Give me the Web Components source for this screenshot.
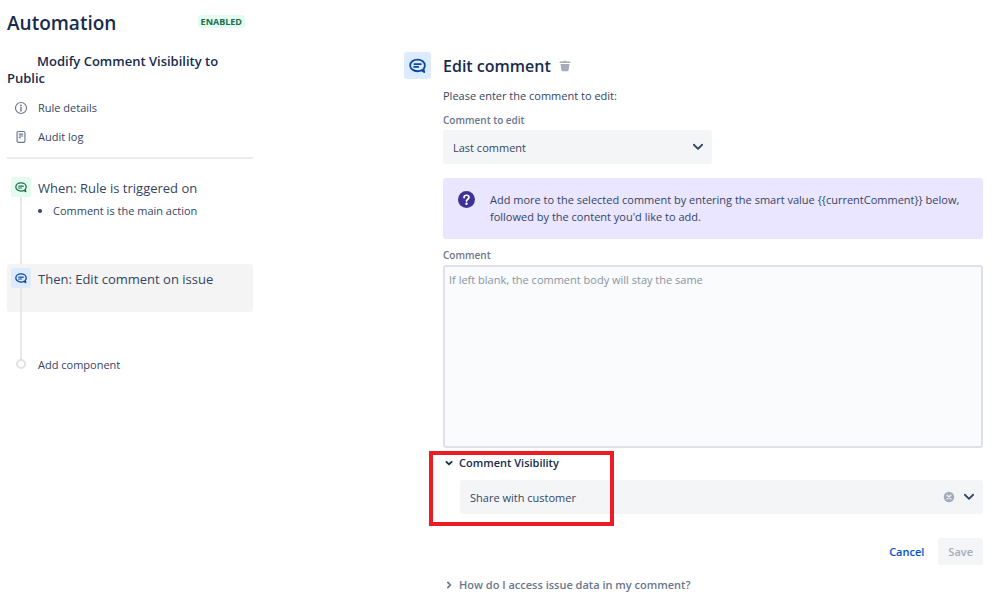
<!DOCTYPE html>
<html lang="en">
<head>
<meta charset="utf-8">
<meta name="viewport" content="width=device-width, initial-scale=1">
<title>Automation</title>
<style>
  body{
    margin: 0;
    background: #fff;
    color: #344563;
    font-family: "Open Sans", "Noto Sans", sans-serif;
    font-size: 11px;
    font-weight: 500;
    line-height: 17px;
    --heading: #172b4d;
    --subtle: #6b778c;
    --field: #f4f5f7;
    --line: #e8e8ec;
    --blue: #0747a6;
  }
</style>
</head>
<body>

<template id="automation-page">
  <style>
    :host{
      display: grid;
      grid-template-columns: 246px minmax(0, 1fr);
      column-gap: 151px;
      padding: 10px 15px 10px 7px;
    }
    main{
      padding-top: 42px;
    }
  </style>
  <aside><slot name="sidebar"></slot></aside>
  <main><slot></slot></main>
</template>

<template id="rule-sidebar">
  <style>
    :host{
      display: block;
    }
    header{
      display: flex;
      align-items: flex-start;
      justify-content: space-between;
      padding-right: 8px;
    }
    h1{
      margin: 0;
      font-size: 19px;
      font-weight: 600;
      line-height: 27px;
      color: var(--heading);
    }
    .badge{
      margin-top: 5px;
      padding: 0 3px;
      border-radius: 3px;
      background: #e3fcef;
      color: #216e4e;
      font-size: 9px;
      font-weight: 700;
      line-height: 13px;
    }
    h2{
      margin: 16px 0 0;
      padding-right: 16px;
      font-size: 13px;
      font-weight: 600;
      line-height: 17px;
      text-indent: 30px;
      color: var(--heading);
    }
    nav{
      display: flex;
      flex-direction: column;
      gap: 12px;
      margin-top: 12px;
      padding-bottom: 12px;
      border-bottom: 2px solid #ebecf0;
    }
    nav a{
      display: flex;
      align-items: center;
      gap: 10px;
      padding-left: 7px;
      color: inherit;
      text-decoration: none;
    }
    nav ui-icon{
      color: var(--subtle);
    }
    .steps{
      margin-top: 14px;
    }
  </style>
  <header>
    <h1>Automation</h1>
    <span class="badge">ENABLED</span>
  </header>
  <h2><slot name="name"></slot></h2>
  <nav>
    <a href="#details"><ui-icon name="info" size="14"></ui-icon>Rule details</a>
    <a href="#audit"><ui-icon name="log" size="14"></ui-icon>Audit log</a>
  </nav>
  <div class="steps"><slot></slot></div>
</template>

<!-- One step of the rule, with the rail that joins it to the next one -->
<template id="rule-step">
  <style>
    :host{
      display: block;
    }
    .card{
      display: grid;
      grid-template-columns: 20px minmax(0, 1fr);
      column-gap: 7px;
      min-height: 44px;
      padding: 4px 4px 0;
      border-radius: 3px;
    }
    :host([selected]) .card{
      background: #f4f4f4;
    }
    .rail{
      display: flex;
      flex-direction: column;
      align-items: center;
    }
    .icon{
      display: grid;
      place-items: center;
      width: 20px;
      height: 20px;
      border-radius: 2px;
      background: #e3fcef;
      color: #216e4e;
    }
    :host([selected]) .icon{
      background: #deebff;
      color: var(--blue);
    }
    .rail::after{
      content: "";
      flex: 1;
      width: 2px;
      background: var(--line);
    }
    .link{
      width: 2px;
      height: 43px;
      margin-left: 13px;
      background: var(--line);
    }
    a{
      display: block;
      color: inherit;
      font-size: 13px;
      font-weight: 400;
      line-height: 22px;
      text-decoration: none;
    }
    ::slotted(ul){
      margin: 3px 0 0;
      padding-left: 15px;
    }
  </style>
  <div class="card">
    <div class="rail"><span class="icon"><ui-icon name="comment" size="12"></ui-icon></span></div>
    <div>
      <a href="#step"><slot name="title"></slot></a>
      <slot></slot>
    </div>
  </div>
  <div class="link"></div>
</template>

<template id="add-step">
  <style>
    :host{
      display: block;
    }
    button{
      display: grid;
      grid-template-columns: 20px auto;
      column-gap: 7px;
      padding: 0 4px;
      border: 0;
      background: none;
      color: inherit;
      font: inherit;
      line-height: 20px;
      cursor: pointer;
    }
    .rail{
      display: flex;
      flex-direction: column;
      align-items: center;
    }
    .rail::before{
      content: "";
      width: 2px;
      height: 4px;
      background: var(--line);
    }
    .dot{
      box-sizing: border-box;
      width: 10px;
      height: 10px;
      border: 2px solid #dfe1e6;
      border-radius: 50%;
    }
  </style>
  <button type="button"><span class="rail"><span class="dot"></span></span><slot></slot></button>
</template>

<template id="action-editor">
  <style>
    :host{
      display: grid;
      grid-template-columns: 27px minmax(0, 1fr);
      column-gap: 12px;
    }
    .icon{
      display: grid;
      place-items: center;
      height: 27px;
      border-radius: 3px;
      background: #deebff;
      color: var(--blue);
    }
    header{
      display: flex;
      align-items: center;
      gap: 8px;
      height: 28px;
    }
    h2{
      margin: 0;
      font-size: 16px;
      font-weight: 600;
      color: var(--heading);
    }
    .delete{
      display: flex;
      padding: 0;
      border: 0;
      background: none;
      color: #a5adba;
      cursor: pointer;
    }
    p{
      margin: 7px 0 8px;
    }
    footer{
      display: flex;
      justify-content: flex-end;
      gap: 4px;
      margin: 24px 0 11px;
    }
    footer button{
      padding: 0 10px;
      border: 0;
      border-radius: 3px;
      background: none;
      color: #0052cc;
      font: inherit;
      font-weight: 600;
      line-height: 27px;
      cursor: pointer;
    }
    footer button:disabled{
      background: var(--field);
      color: #a5adba;
      cursor: default;
    }
  </style>
  <span class="icon"><ui-icon name="comment" size="17"></ui-icon></span>
  <div>
    <header>
      <h2><slot name="title"></slot></h2>
      <button class="delete" type="button" aria-label="Delete"><ui-icon name="trash" size="12"></ui-icon></button>
    </header>
    <p><slot name="intro"></slot></p>
    <slot></slot>
    <footer>
      <button type="button">Cancel</button>
      <button type="button" disabled>Save</button>
    </footer>
    <slot name="help"></slot>
  </div>
</template>

<template id="select-field">
  <style>
    :host{
      display: block;
    }
    label{
      display: block;
      margin-bottom: 1px;
      color: var(--subtle);
      font-size: 10px;
      font-weight: 600;
    }
    label[hidden]{
      display: none;
    }
    .box{
      display: grid;
      grid-template-columns: minmax(0, 1fr) auto;
      align-items: center;
      border-radius: 3px;
      background: var(--field);
    }
    /* the select spans the box, the icons share its last column */
    select{
      grid-area: 1 / 1 / 2 / 3;
      width: 100%;
      height: 34px;
      padding: 0 10px;
      border: 0;
      border-radius: 3px;
      background: none;
      color: inherit;
      font: inherit;
      appearance: none;
    }
    .tools{
      grid-area: 1 / 2 / 2 / 3;
      display: flex;
      align-items: center;
      gap: 8px;
      padding-right: 8px;
      pointer-events: none;
    }
    .clear{
      display: flex;
      padding: 0;
      border: 0;
      background: none;
      color: #a5adba;
      pointer-events: auto;
      cursor: pointer;
    }
    .clear[hidden]{
      display: none;
    }
  </style>
  <label for="control"></label>
  <div class="box">
    <select id="control"></select>
    <div class="tools">
      <button class="clear" type="button" aria-label="Clear"><ui-icon name="clear" size="12"></ui-icon></button>
      <ui-icon name="chevron" size="12"></ui-icon>
    </div>
  </div>
</template>

<template id="text-field">
  <style>
    :host{
      display: block;
    }
    label{
      display: block;
      margin-bottom: 1px;
      color: var(--subtle);
      font-size: 10px;
      font-weight: 600;
    }
    textarea{
      display: block;
      box-sizing: border-box;
      width: 100%;
      height: 183px;
      padding: 4px;
      border: 2px solid #dfe1e6;
      border-radius: 3px;
      background: #fafbfc;
      color: inherit;
      font: inherit;
      resize: none;
    }
    textarea::placeholder{
      color: #8993a4;
      opacity: 1;
    }
  </style>
  <label for="control"></label>
  <textarea id="control"></textarea>
</template>

<template id="info-panel">
  <style>
    :host{
      display: grid;
      grid-template-columns: 17px minmax(0, 1fr);
      column-gap: 15px;
      margin: 14px 0 8px;
      padding: 13px 8px 14px 15px;
      border-radius: 3px;
      background: #eae6ff;
    }
    ui-icon{
      color: #403294;
    }
  </style>
  <ui-icon name="question" size="17"></ui-icon>
  <div><slot></slot></div>
</template>

<template id="disclosure-section">
  <style>
    :host{
      display: block;
      position: relative;
    }
    :host([open]){
      margin-top: 6px;
    }
    button{
      display: flex;
      align-items: center;
      gap: 4px;
      padding: 0;
      border: 0;
      background: none;
      color: var(--subtle);
      font: inherit;
      font-weight: 600;
      line-height: 18px;
      cursor: pointer;
    }
    :host([open]) button{
      color: var(--heading);
    }
    ui-icon{
      transform: rotate(-90deg);
    }
    :host([open]) ui-icon{
      transform: none;
    }
    .body{
      display: none;
      margin: 8px 0 0 17px;
    }
    :host([open]) .body{
      display: block;
    }
    /* red frame laid over the section */
    :host([marked])::after{
      content: "";
      position: absolute;
      top: -3px;
      left: -14px;
      box-sizing: border-box;
      width: 185px;
      height: 75px;
      border: 4px solid #ed1c24;
      pointer-events: none;
    }
  </style>
  <button type="button"><ui-icon name="chevron-small" size="12"></ui-icon><slot name="title"></slot></button>
  <div class="body"><slot></slot></div>
</template>

<automation-page>
  <rule-sidebar slot="sidebar">
    <span slot="name">Modify Comment Visibility to Public</span>
    <rule-step>
      <span slot="title">When: Rule is triggered on</span>
      <ul><li>Comment is the main action</li></ul>
    </rule-step>
    <rule-step selected>
      <span slot="title">Then: Edit comment on issue</span>
    </rule-step>
    <add-step>Add component</add-step>
  </rule-sidebar>

  <action-editor>
    <span slot="title">Edit comment</span>
    <span slot="intro">Please enter the comment to edit:</span>
    <select-field label="Comment to edit" value="Last comment" style="max-width: 269px"></select-field>
    <info-panel>Add more to the selected comment by entering the smart value {{currentComment}} below, followed by the content you'd like to add.</info-panel>
    <text-field label="Comment" placeholder="If left blank, the comment body will stay the same"></text-field>
    <disclosure-section open marked>
      <span slot="title">Comment Visibility</span>
      <select-field name="Comment Visibility" value="Share with customer" clearable></select-field>
    </disclosure-section>
    <disclosure-section slot="help">
      <span slot="title">How do I access issue data in my comment?</span>
    </disclosure-section>
  </action-editor>
</automation-page>

<script>
// All icons are drawn on a 16x16 grid
const ICONS = {
  info: `<circle cx="8" cy="8" r="6.3" fill="none" stroke="currentColor" stroke-width="1.3"/>
    <circle cx="8" cy="5.1" r="1" fill="currentColor"/>
    <path d="M8 7.4v4" stroke="currentColor" stroke-width="1.6" stroke-linecap="round"/>`,
  log: `<rect x="3.5" y="1.7" width="9" height="12.4" rx="1.5" fill="none" stroke="currentColor" stroke-width="1.3"/>
    <path d="M5.5 4.7h5M5.5 6.8h5M5.5 8.9h2.5" stroke="currentColor" stroke-width="1.3"/>`,
  comment: `<path d="M12.3 12.2C11.2 13 9.7 13.4 8 13.4 4.1 13.4 1.1 11 1.1 7.9S4.1 2.4 8 2.4s6.9 2.4 6.9 5.500c0 1.300-.4 2.400-1.200 3.300l.6 3-2.400-1.500" fill="none" stroke="currentColor" stroke-width="1.7" stroke-linecap="round" stroke-linejoin="round"/>
    <path d="M5 6.700h6.200M4.800 9.300h3.900" stroke="currentColor" stroke-width="1.6" stroke-linecap="round"/>`,
  trash: `<path d="M.8 4V2.800c0-.5.4-.9.9-.9H6l.5-1h3l.5 1h4.300c.5 0 .9.4.9.9V4zM2 5.200h12l-1.200 8.600c-.1.700-.7 1.200-1.400 1.200H4.600c-.7 0-1.300-.5-1.400-1.200z" fill="currentColor"/>`,
  chevron: `<path d="M2.500 5L8 10.500 13.500 5" fill="none" stroke="currentColor" stroke-width="2.400" stroke-linecap="round" stroke-linejoin="round"/>`,
  "chevron-small": `<path d="M4.500 6.500L8 9.800l3.500-3.300" fill="none" stroke="currentColor" stroke-width="2.400" stroke-linecap="round" stroke-linejoin="round"/>`,
  clear: `<circle cx="8" cy="8" r="7" fill="currentColor"/>
    <path d="M5.500 5.500l5 5M10.500 5.500l-5 5" stroke="#f4f5f7" stroke-width="1.800" stroke-linecap="round"/>`,
  question: `<circle cx="8" cy="8" r="8" fill="currentColor"/>
    <path d="M5.700 6.200C5.700 4.800 6.700 4 8 4s2.300.8 2.300 2c0 1.700-2.300 1.800-2.300 3.500" fill="none" stroke="#fff" stroke-width="1.600" stroke-linecap="round"/>
    <circle cx="8" cy="12" r="1.100" fill="#fff"/>`,
};

class TemplateElement extends HTMLElement {
  constructor() {
    super();
    const shadow = this.attachShadow({mode: 'open'});
    const tpl = document.getElementById(this.localName);
    shadow.appendChild(tpl.content.cloneNode(true));
  }
}

class UIIcon extends HTMLElement {
  constructor() {
    super();
    this.attachShadow({mode: 'open'});
  }
  connectedCallback() {
    const size = this.getAttribute('size') || '16';
    this.shadowRoot.innerHTML = `
      <style>
        :host{ display: inline-flex; flex: none; }
        svg{ display: block; }
      </style>
      <svg width="${size}" height="${size}" viewBox="0 0 16 16" aria-hidden="true">${ICONS[this.getAttribute('name')]}</svg>`;
  }
}

class SelectField extends TemplateElement {
  connectedCallback() {
    const label = this.shadowRoot.querySelector('label');
    const select = this.shadowRoot.querySelector('select');
    const clear = this.shadowRoot.querySelector('.clear');
    const text = this.getAttribute('label');
    label.hidden = !text;
    label.textContent = text || '';
    if(!text){
      select.setAttribute('aria-label', this.getAttribute('name'));
    }
    select.replaceChildren(new Option(this.getAttribute('value')));
    clear.hidden = !this.hasAttribute('clearable');
    clear.onclick = () => { select.selectedIndex = -1; };
  }
}

class TextField extends TemplateElement {
  connectedCallback() {
    this.shadowRoot.querySelector('label').textContent = this.getAttribute('label');
    this.shadowRoot.querySelector('textarea').placeholder = this.getAttribute('placeholder');
  }
}

class DisclosureSection extends TemplateElement {
  connectedCallback() {
    const button = this.shadowRoot.querySelector('button');
    button.setAttribute('aria-expanded', this.hasAttribute('open'));
    button.onclick = () => {
      this.toggleAttribute('open');
      button.setAttribute('aria-expanded', this.hasAttribute('open'));
    };
  }
}

customElements.define('ui-icon', UIIcon);
customElements.define('automation-page', class extends TemplateElement {});
customElements.define('rule-sidebar', class extends TemplateElement {});
customElements.define('rule-step', class extends TemplateElement {});
customElements.define('add-step', class extends TemplateElement {});
customElements.define('action-editor', class extends TemplateElement {});
customElements.define('info-panel', class extends TemplateElement {});
customElements.define('select-field', SelectField);
customElements.define('text-field', TextField);
customElements.define('disclosure-section', DisclosureSection);
</script>
</body>
</html>
